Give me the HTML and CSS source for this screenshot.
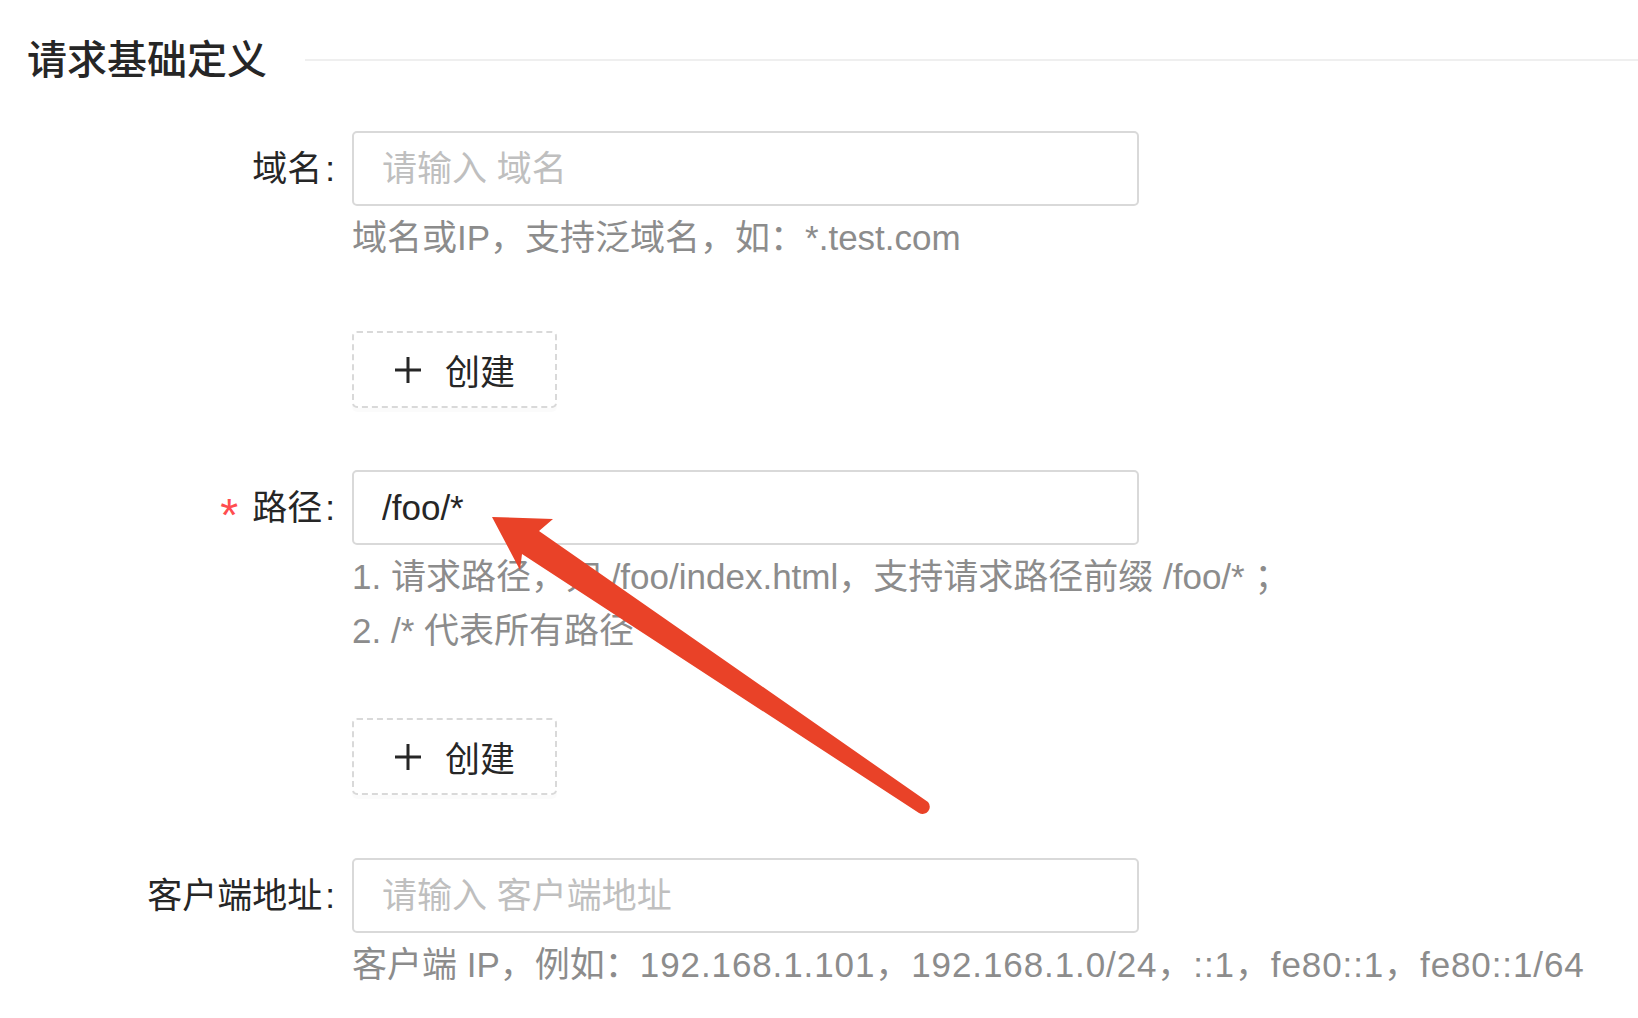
FILE: index.html
```html
<!DOCTYPE html>
<html lang="zh-CN">
<head>
    <meta charset="UTF-8">
    <meta name="viewport" content="width=device-width, initial-scale=1.0">
    <title>请求基础定义</title>
    <link rel="stylesheet" href="styles.css">
</head>
<body>

<div class="page">
    <div class="section-title">
        <h3>请求基础定义</h3>
        <div class="divider"></div>
    </div>

    <form class="form">
        <!-- 域名 -->
        <div class="form-item item-domain">
            <label class="form-label" for="host">域名</label>
            <div class="form-control">
                <input class="input" id="host" type="text" placeholder="请输入 域名">
                <div class="help">域名或IP，支持泛域名，如：*.test.com</div>
            </div>
        </div>
        <div class="form-item no-label add-domain">
            <button type="button" class="btn-dashed">
                <svg class="icon-plus" viewBox="0 0 28 28" width="28" height="28"><path d="M14 1v26M1 14h26" stroke="#262626" stroke-width="3" fill="none"/></svg>
                <span>创建</span>
            </button>
        </div>

        <!-- 路径 -->
        <div class="form-item item-path">
            <label class="form-label" for="path"><span class="required">*</span>路径</label>
            <div class="form-control">
                <input class="input" id="path" type="text" value="/foo/*">
                <div class="help">1. 请求路径，如 /foo/index.html，支持请求路径前缀 /foo/* ；</div>
                <div class="help">2. /* 代表所有路径</div>
            </div>
        </div>
        <div class="form-item no-label add-path">
            <button type="button" class="btn-dashed">
                <svg class="icon-plus" viewBox="0 0 28 28" width="28" height="28"><path d="M14 1v26M1 14h26" stroke="#262626" stroke-width="3" fill="none"/></svg>
                <span>创建</span>
            </button>
        </div>

        <!-- 客户端地址 -->
        <div class="form-item item-client">
            <label class="form-label" for="client">客户端地址</label>
            <div class="form-control">
                <input class="input" id="client" type="text" placeholder="请输入 客户端地址">
                <div class="help">客户端 IP，例如：<span class="num">192.168.1.101，192.168.1.0/24，::1，fe80::1，fe80::1/64</span></div>
            </div>
        </div>
    </form>

    <!-- 标注箭头 -->
    <svg class="arrow" viewBox="0 0 1638 1018" width="1638" height="1018">
        <path d="M492 517 L553 519 L539 531 L928 802 A7.2 7.2 0 0 1 919 813 L522 554 L520 570 Z" fill="#e94228"/>
    </svg>
</div>

</body>
</html>
```

FILE: styles.css
```css
* { margin: 0; padding: 0; box-sizing: border-box; }
body {
    background: #fff;
    font-family: "Liberation Sans", "Noto Sans CJK SC", sans-serif;
    color: #262626;
}
.page {
    position: relative; width: 1638px; height: 1018px; overflow: hidden;
}

/* 标题 */
.section-title {
    display: flex; align-items: center; padding: 30px 0 0 27px;
}
.section-title h3 {
    font-size: 40px; line-height: 60px; font-weight: 500; color: #262626;
}
.divider {
    flex: 1; height: 2px; background: #efefef; margin-left: 38px;
}

/* 表单 */
.form-item { display: flex; align-items: flex-start; }
.form-item.no-label { padding-left: 352px; }
.item-domain { margin-top: 41px; }
.add-domain { margin-top: 66px; }
.item-path { margin-top: 62px; }
.add-path { margin-top: 60px; }
.item-client { margin-top: 63px; }

.form-label {
    width: 352px; flex-shrink: 0; padding-right: 17px;
    text-align: right; font-size: 35px; line-height: 75px; color: #262626;
}
.form-label::after { content: ":"; margin-left: 3px; }
.required {
    color: #ff4d4f; font-size: 46px; line-height: 0; vertical-align: -11px; margin-right: 14px;
}

.form-control { display: flex; flex-direction: column; }
.input {
    width: 787px; height: 75px; padding: 0 28px;
    border: 2px solid #d9d9d9; border-radius: 5px; outline: none;
    font-family: inherit; font-size: 35px; color: #262626; background: #fff;
}
.input::placeholder { color: #bfbfbf; }
.help {
    font-size: 35px; line-height: 54px; color: #8c8c8c; white-space: nowrap;
}
.input + .help { margin-top: 5px; }
.help .num { letter-spacing: 0.9px; }

.btn-dashed {
    display: inline-flex; align-items: center; justify-content: center; gap: 23px;
    width: 205px; height: 77px; background: #fff;
    border: 2px dashed #d9d9d9; border-radius: 5px;
    box-shadow: 0 4px 0 rgba(0, 0, 0, 0.015);
    font-family: inherit; font-size: 35px; color: #262626; cursor: pointer;
}
.icon-plus { display: block; flex-shrink: 0; }

/* 箭头 */
.arrow {
    position: absolute; left: 0; top: 0; pointer-events: none;
}
```
